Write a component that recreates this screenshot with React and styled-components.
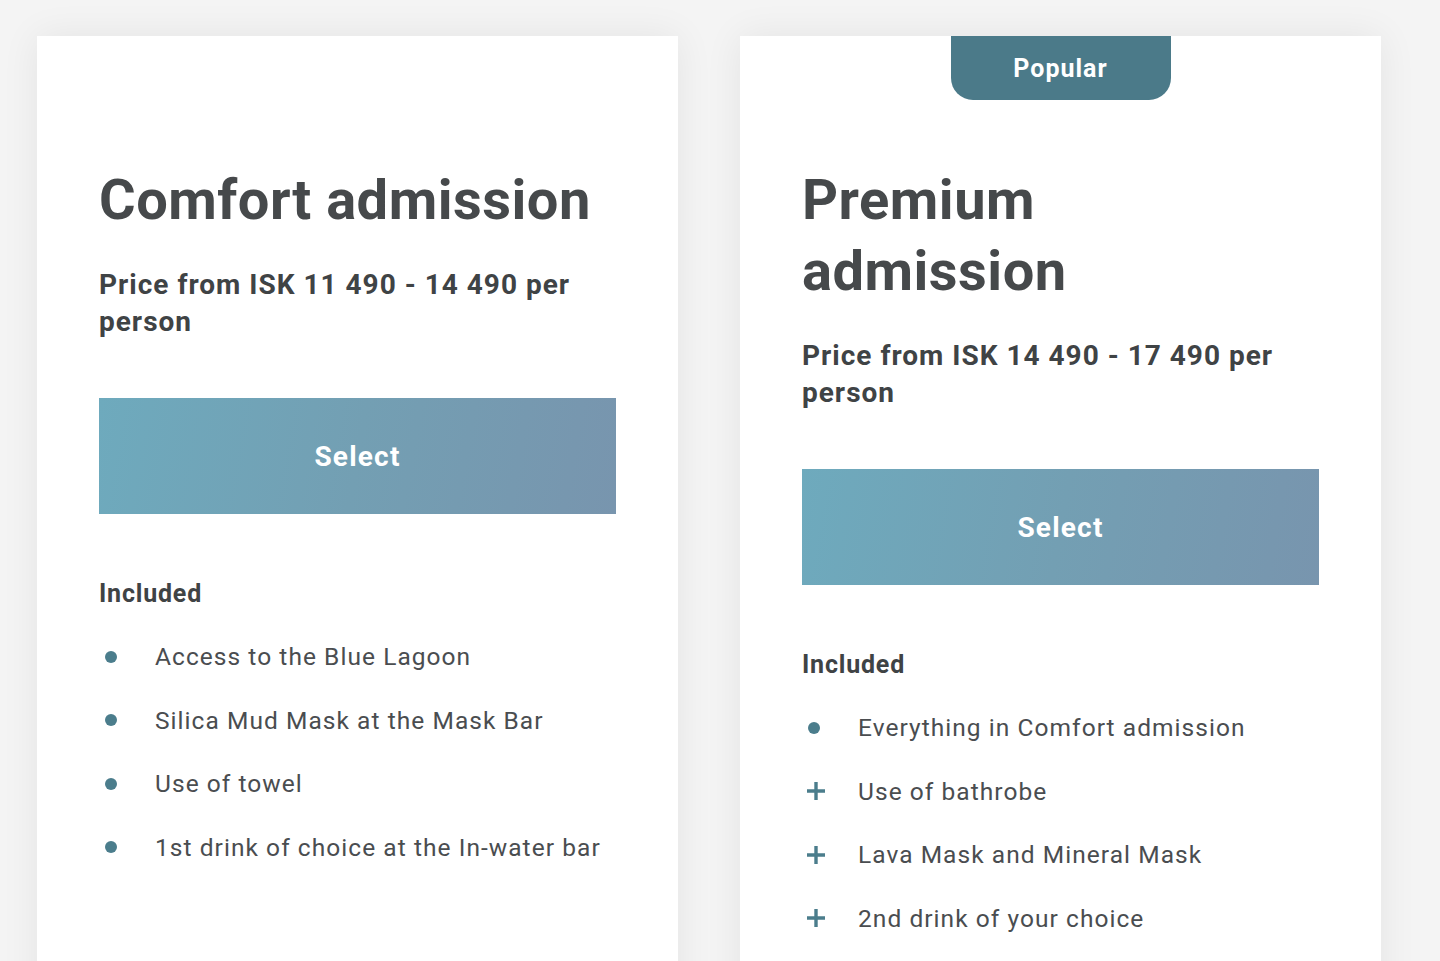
import React from "react";
import styled, { createGlobalStyle } from "styled-components";

const GlobalStyle = createGlobalStyle`
  body {
    margin: 0;
    background: #f4f4f4;
    font-family: Roboto, "Liberation Sans", sans-serif;
    overflow: hidden;
  }
`;

const Page = styled.div`
  display: flex;
  gap: 62px;
  padding: 36px 0 0 37px;
  height: 925px;
  overflow: hidden;
`;

const Card = styled.div`
  position: relative;
  width: 641px;
  min-height: 1000px;
  box-sizing: border-box;
  background: #fff;
  padding: 129px 62px 0 62px;
  box-shadow: 0 0 36px rgba(0, 0, 0, 0.07);
`;

const Badge = styled.div`
  position: absolute;
  top: 0;
  left: 50%;
  transform: translateX(-50%);
  width: 220px;
  height: 64px;
  background: #4b7a89;
  color: #fff;
  border-radius: 0 0 22px 22px;
  display: flex;
  align-items: center;
  justify-content: center;
  font-size: 25px;
  font-weight: 700;
  letter-spacing: 1px;
`;

const Title = styled.h2`
  margin: 0;
  max-width: 500px;
  font-size: 56px;
  line-height: 71px;
  font-weight: 700;
  color: #46494b;
  letter-spacing: 0.5px;
`;

const Price = styled.p`
  margin: 30px 0 0;
  font-size: 28px;
  line-height: 37px;
  font-weight: 700;
  color: #3f4345;
  letter-spacing: 1px;
`;

const SelectButton = styled.button`
  display: flex;
  align-items: center;
  justify-content: center;
  margin-top: 58px;
  width: 517px;
  height: 116px;
  border: none;
  background: linear-gradient(100deg, #6eaabd 0%, #739fb3 50%, #7895ae 100%);
  color: #fff;
  font-family: inherit;
  font-size: 28px;
  font-weight: 700;
  letter-spacing: 1.2px;
  cursor: pointer;
`;

const Included = styled.h4`
  margin: 64px 0 0;
  font-size: 25px;
  line-height: 32px;
  font-weight: 700;
  color: #3f4345;
  letter-spacing: 0.8px;
`;

const List = styled.ul`
  list-style: none;
  margin: 15px 0 0;
  padding: 0;
`;

const Item = styled.li`
  display: flex;
  align-items: center;
  height: 63.5px;
  font-size: 24.5px;
  color: #4a4d50;
  letter-spacing: 1.05px;
`;

const Marker = styled.span`
  width: 56px;
  flex-shrink: 0;
  display: flex;
  align-items: center;
  padding-left: 6px;
  box-sizing: border-box;
`;

const Dot = styled.span`
  width: 12px;
  height: 12px;
  border-radius: 50%;
  background: #4b7d8c;
`;

const Plus = () => (
  <svg width="20" height="20" viewBox="0 0 20 20" style={{ marginLeft: -2 }}>
    <path d="M10 1v18M1 10h18" stroke="#4b7d8c" strokeWidth="3.4" />
  </svg>
);

const plans = [
  {
    title: "Comfort admission",
    price: "Price from ISK 11 490 - 14 490 per person",
    items: [
      ["dot", "Access to the Blue Lagoon"],
      ["dot", "Silica Mud Mask at the Mask Bar"],
      ["dot", "Use of towel"],
      ["dot", "1st drink of choice at the In-water bar"],
    ],
  },
  {
    title: "Premium admission",
    popular: true,
    price: "Price from ISK 14 490 - 17 490 per person",
    items: [
      ["dot", "Everything in Comfort admission"],
      ["plus", "Use of bathrobe"],
      ["plus", "Lava Mask and Mineral Mask"],
      ["plus", "2nd drink of your choice"],
    ],
  },
];

export default function App() {
  return (
    <>
      <GlobalStyle />
      <Page>
        {plans.map((plan) => (
          <Card key={plan.title}>
            {plan.popular && <Badge>Popular</Badge>}
            <Title>{plan.title}</Title>
            <Price>{plan.price}</Price>
            <SelectButton>Select</SelectButton>
            <Included>Included</Included>
            <List>
              {plan.items.map(([kind, text]) => (
                <Item key={text}>
                  <Marker>{kind === "dot" ? <Dot /> : <Plus />}</Marker>
                  {text}
                </Item>
              ))}
            </List>
          </Card>
        ))}
      </Page>
    </>
  );
}
